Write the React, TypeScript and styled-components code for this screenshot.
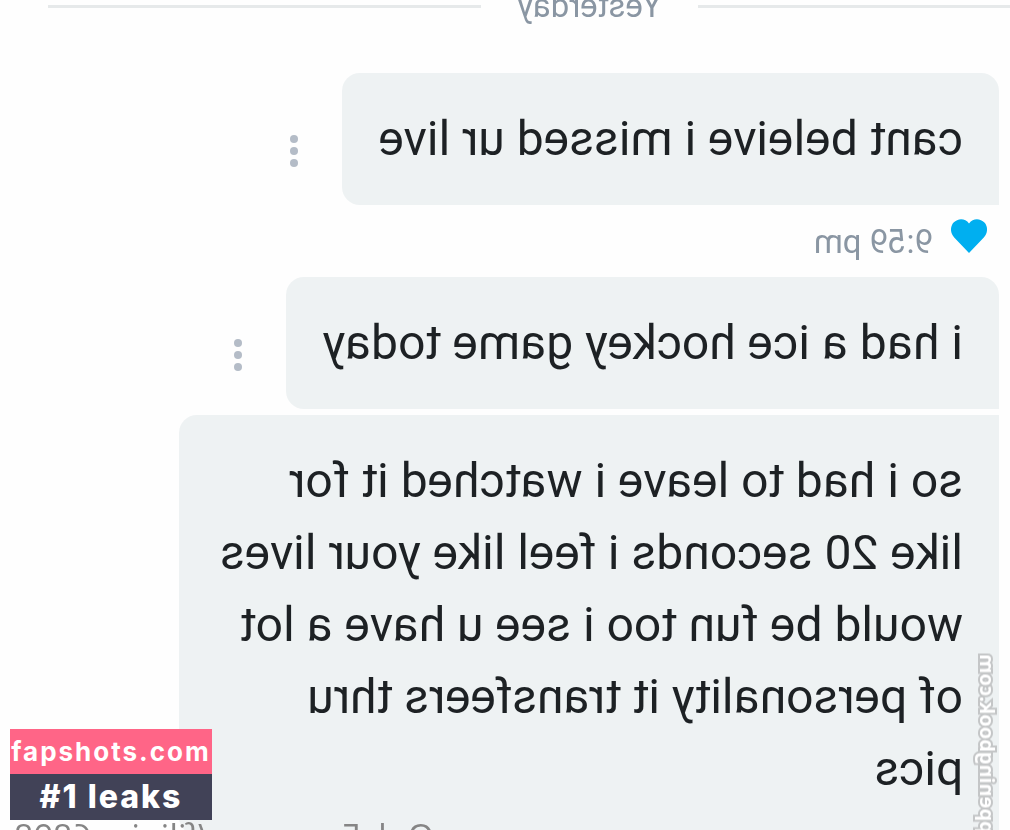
import React from "react";
import styled, { createGlobalStyle } from "styled-components";

const GlobalStyle = createGlobalStyle`
  body {
    margin: 0;
    background: #fefefe;
    font-family: Roboto, "Liberation Sans", sans-serif;
  }
`;

const Page = styled.div`
  position: relative;
  height: 100vh;
  overflow: hidden;
`;

/* The conversation is shown as a mirror image. */
const Mirror = styled.main`
  position: relative;
  height: 100%;
  overflow: hidden;
  transform: scaleX(-1);
`;

const Divider = styled.div`
  display: flex;
  align-items: center;
  gap: 36px;
  margin: -14px 48px 47px 0;
  color: #8a96a3;
  font-size: 33px;
  line-height: 40px;
`;

const Rule = styled.span<{ $grow: number }>`
  flex: ${(p) => p.$grow} 1 0;
  height: 3px;
  background: #e6e9ea;
`;

const Thread = styled.div`
  display: flex;
  flex-direction: column;
  padding: 0 11px;
`;

const Row = styled.div<{ $gap?: number }>`
  display: flex;
  align-items: center;
  gap: 36px;
  margin-bottom: ${(p) => p.$gap ?? 0}px;
`;

const Bubble = styled.p<{ $joined?: boolean }>`
  box-sizing: border-box;
  max-width: 83%;
  margin: 0;
  padding: 30px 36px;
  border-radius: ${(p) => (p.$joined ? 0 : 18)}px 18px 18px 0;
  background: #eef2f3;
  color: #1d2124;
  font-size: 48px;
  line-height: 72px;
`;

const MenuButton = styled.button`
  flex: none;
  display: flex;
  padding: 24px 8px 0;
  border: 0;
  background: none;
`;

const Meta = styled.div`
  display: flex;
  align-items: center;
  gap: 18px;
  height: 72px;
  padding-left: 12px;
  color: #8a96a3;
  font-size: 33px;
`;

const LikeButton = styled.button`
  display: flex;
  padding: 0 0 10px;
  border: 0;
  background: none;
`;

const AccountMark = styled.span`
  position: absolute;
  left: 576px;
  top: 816px;
  color: #858585;
  font-family: "Open Sans", sans-serif;
  font-size: 34px;
  line-height: 40px;
  white-space: nowrap;
`;

const SideMark = styled.span`
  position: absolute;
  left: 9px;
  top: 654px;
  writing-mode: vertical-rl;
  transform: rotate(180deg);
  color: #ffffff;
  font-family: "Noto Sans", sans-serif;
  font-size: 20px;
  font-weight: 700;
  line-height: 28px;
  white-space: nowrap;
  -webkit-text-stroke: 4px #c4c6c7;
  paint-order: stroke fill;
`;

const Badge = styled.aside`
  position: absolute;
  left: 10px;
  bottom: 10px;
  width: 202px;
  color: #ffffff;
  font-family: Inter, sans-serif;
  font-weight: 700;
  text-align: center;
  white-space: nowrap;
`;

const BadgeSite = styled.div`
  background: #ff6587;
  font-size: 26px;
  line-height: 45px;
  letter-spacing: 2px;
`;

const BadgeTag = styled.div`
  background: #414257;
  font-size: 32px;
  font-weight: 800;
  line-height: 46px;
  letter-spacing: 2px;
`;

function Menu() {
  return (
    <MenuButton type="button" aria-label="Message options">
      <svg width="8" height="32" viewBox="0 0 8 32" fill="#b4bcc7">
        <circle cx="4" cy="4" r="4" />
        <circle cx="4" cy="16" r="4" />
        <circle cx="4" cy="28" r="4" />
      </svg>
    </MenuButton>
  );
}

export default function App() {
  return (
    <Page>
      <GlobalStyle />
      <Mirror>
        <Divider>
          <Rule $grow={312} />
          <span>Yesterday</span>
          <Rule $grow={433} />
        </Divider>
        <Thread>
          <Row>
            <Bubble>cant beleive i missed ur live</Bubble>
            <Menu />
          </Row>
          <Meta>
            <LikeButton type="button" aria-label="Like">
              <svg width="36" height="34" viewBox="0 0 36 34" fill="#00aff0">
                <path d="M18 34 3.2 18.6C-1 14-1 7.600 2.600 3.600 6.800-1 14-1.200 18 4.400 22-1.200 29.200-1 33.400 3.600 37 7.600 37 14 32.800 18.600Z" />
              </svg>
            </LikeButton>
            <span>9:59 pm</span>
          </Meta>
          <Row $gap={6}>
            <Bubble>i had a ice hockey game today</Bubble>
            <Menu />
          </Row>
          <Row>
            <Bubble $joined>
              so i had to leave i watched it for like 20 seconds i feel like your lives would be
              fun too i see u have a lot of personality it transfeers thru pics
            </Bubble>
          </Row>
        </Thread>
        <SideMark>fappeningbook.com</SideMark>
        <AccountMark>OnlyFans.com/filipina6898</AccountMark>
      </Mirror>
      <Badge>
        <BadgeSite>fapshots.com</BadgeSite>
        <BadgeTag>#1 leaks</BadgeTag>
      </Badge>
    </Page>
  );
}
